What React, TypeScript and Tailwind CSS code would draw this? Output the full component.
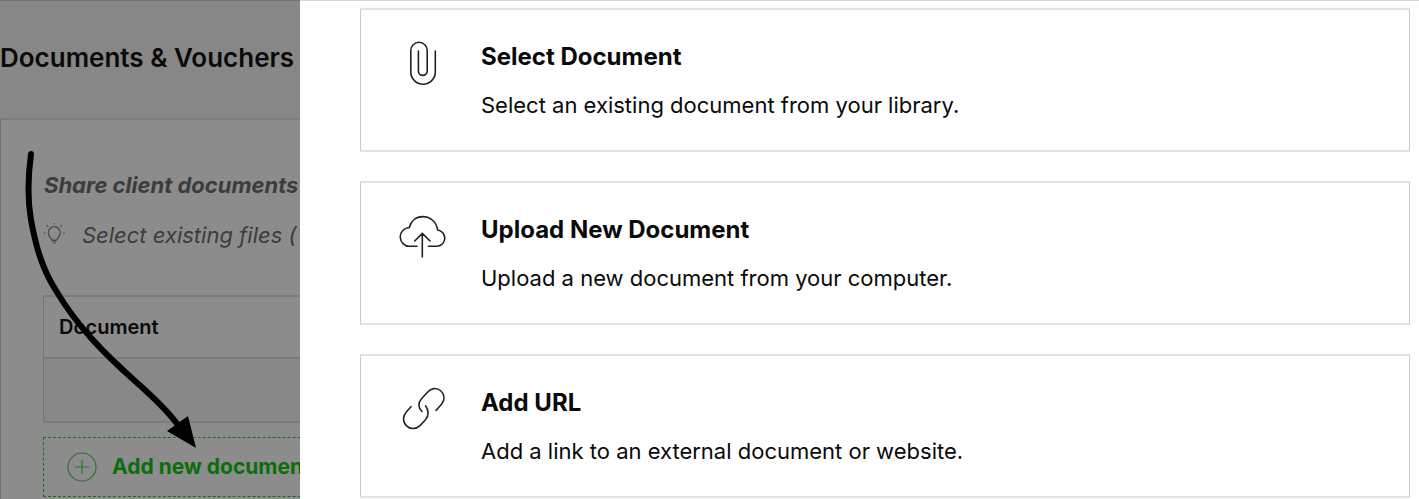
import type { ReactNode } from "react";

interface OptionProps {
  title: string;
  description: string;
  children: ReactNode;
}

const OptionCard = ({ title, description, children }: OptionProps) => {
  return (
    <button
      type="button"
      className="flex h-36 w-full items-start border-x border-y-2 border-x-[#c9c9c9] border-y-[#e3e3e3] bg-white pt-7 pl-[38px] text-left text-[#0a0a0a]"
    >
      <svg
        aria-hidden="true"
        className="mt-px h-12 w-12 shrink-0"
        viewBox="0 0 48 48"
        fill="none"
        stroke="#222222"
        strokeWidth="1.6"
        strokeLinecap="round"
        strokeLinejoin="round"
      >
        {children}
      </svg>
      <span className="mt-[3px] ml-[34px] flex flex-col gap-4">
        <span className="text-2xl font-bold">{title}</span>
        <span className="text-[22px] leading-8">{description}</span>
      </span>
    </button>
  );
};

const DocumentsPage = () => {
  return (
    <div className="relative w-[300px] shrink-0 overflow-hidden border-t border-[#747474] bg-[#878787] whitespace-nowrap">
      <div className="flex h-full w-[640px] flex-col">
        <h1 className="flex h-[117px] items-center pb-1 text-[26px] font-semibold text-[#0a0a0a]">
          Documents &amp; Vouchers
        </h1>
        <div className="flex-1 border-t-2 border-l border-t-[#7d7d7d] border-l-[#707070] bg-[#8c8c8c] pl-[42px]">
          <p className="mt-[49px] pl-px text-[22px] leading-8 font-bold text-[#3c3c3c] italic">
            Share client documents
          </p>
          <p className="mt-[18px] flex h-8 items-center text-[22px] text-[#3c3c3c] italic">
            <svg
              aria-hidden="true"
              className="mr-[15px] h-6 w-6"
              viewBox="0 0 24 24"
              fill="none"
              stroke="#484848"
              strokeWidth="1.2"
            >
              <path d="M9 17.200C8.600 15.400 5.300 13.800 5.300 9.700a6 6 0 0 1 12 0c0 4.100-3.300 5.700-3.700 7.500zM9.200 18h4.200M10 20h2.600M11.300-.5v1.800M.8 10.200h1.600M20.200 10.200h1.600M3.800 2.200l1.300 1.400M18.800 2.200l-1.300 1.400" />
            </svg>
            Select existing files (
          </p>
          <table className="mt-11 w-full border-collapse text-left">
            <thead>
              <tr className="h-[62px]">
                <th className="border-y-2 border-l border-y-[#7c7c7c] border-l-[#747474] pl-[15px] text-xl font-semibold text-[#0a0a0a]">
                  Document
                </th>
              </tr>
            </thead>
            <tbody>
              <tr className="h-16 bg-[#888888]">
                <td className="border-y-2 border-l border-y-[#7c7c7c] border-l-[#747474]"></td>
              </tr>
            </tbody>
          </table>
          <button
            type="button"
            className="mt-3.5 flex h-[60px] w-full items-center border border-dashed border-[#147214] pl-[22px] text-[21px] font-bold text-[#0b6e0b]"
          >
            <svg
              aria-hidden="true"
              className="mr-3.5 h-8 w-8"
              viewBox="0 0 32 32"
              fill="none"
              stroke="#2b762b"
              strokeWidth="1.2"
            >
              <circle cx="16" cy="16" r="14" />
              <path d="M9 16h14M16 9v14" />
            </svg>
            Add new document
          </button>
        </div>
      </div>
      {/* arrow pointing at the add button */}
      <svg
        aria-hidden="true"
        className="pointer-events-none absolute top-0 left-0 -mt-px"
        width="300"
        height="499"
        viewBox="0 0 300 499"
      >
        <path
          d="M31 154C28 176 27 197 31 220C36 247 42 268 55 289C78 328 106 355 135 381C152 396 167 410 178 425"
          fill="none"
          stroke="#000"
          strokeWidth="6"
          strokeLinecap="round"
        />
        <path d="M196 448L188 416L167 431Z" fill="#000" />
      </svg>
    </div>
  );
};

const App = () => {
  return (
    <div className="flex min-h-screen bg-white font-[Inter,sans-serif]">
      <DocumentsPage />
      <main className="flex flex-1 flex-col gap-[29px] border-t border-[#d4d4d4] pt-[7px] pr-[9px] pl-[60px]">
        <OptionCard
          title="Select Document"
          description="Select an existing document from your library."
        >
          <path d="M36.300 12V33a12.250 12.250 0 0 1-24.500 0V11.500a8.200 8.200 0 0 1 16.400 0V32a4.400 4.400 0 0 1-8.800 0V12" />
        </OptionCard>
        <OptionCard
          title="Upload New Document"
          description="Upload a new document from your computer."
        >
          <path d="M18 34.300H11a9.400 9.400 0 0 1-.7-18.800C12 9 17 4.600 23.600 4.600c8 0 13.800 5.200 15 13.400a8.200 8.200 0 0 1-.3 16.300H29.500M23.300 45V21.500M15.700 29l7.600-7.600L31 29" />
        </OptionCard>
        <OptionCard
          title="Add URL"
          description="Add a link to an external document or website."
        >
          <path d="M23 26.500C19 23 19 17.500 22.500 13.700L28.500 7.200C32 3 37.500 2.200 42 6C46 10 45.800 15.200 42.500 19.200L37 25.500M12 21.700L7.500 26.800C3.500 31 3.500 37 7.500 40.800C11.500 44.600 17 44.300 21 40.600L26.500 34.700C30 31 29.800 25 26.500 20.800" />
        </OptionCard>
      </main>
    </div>
  );
};

export default App;
